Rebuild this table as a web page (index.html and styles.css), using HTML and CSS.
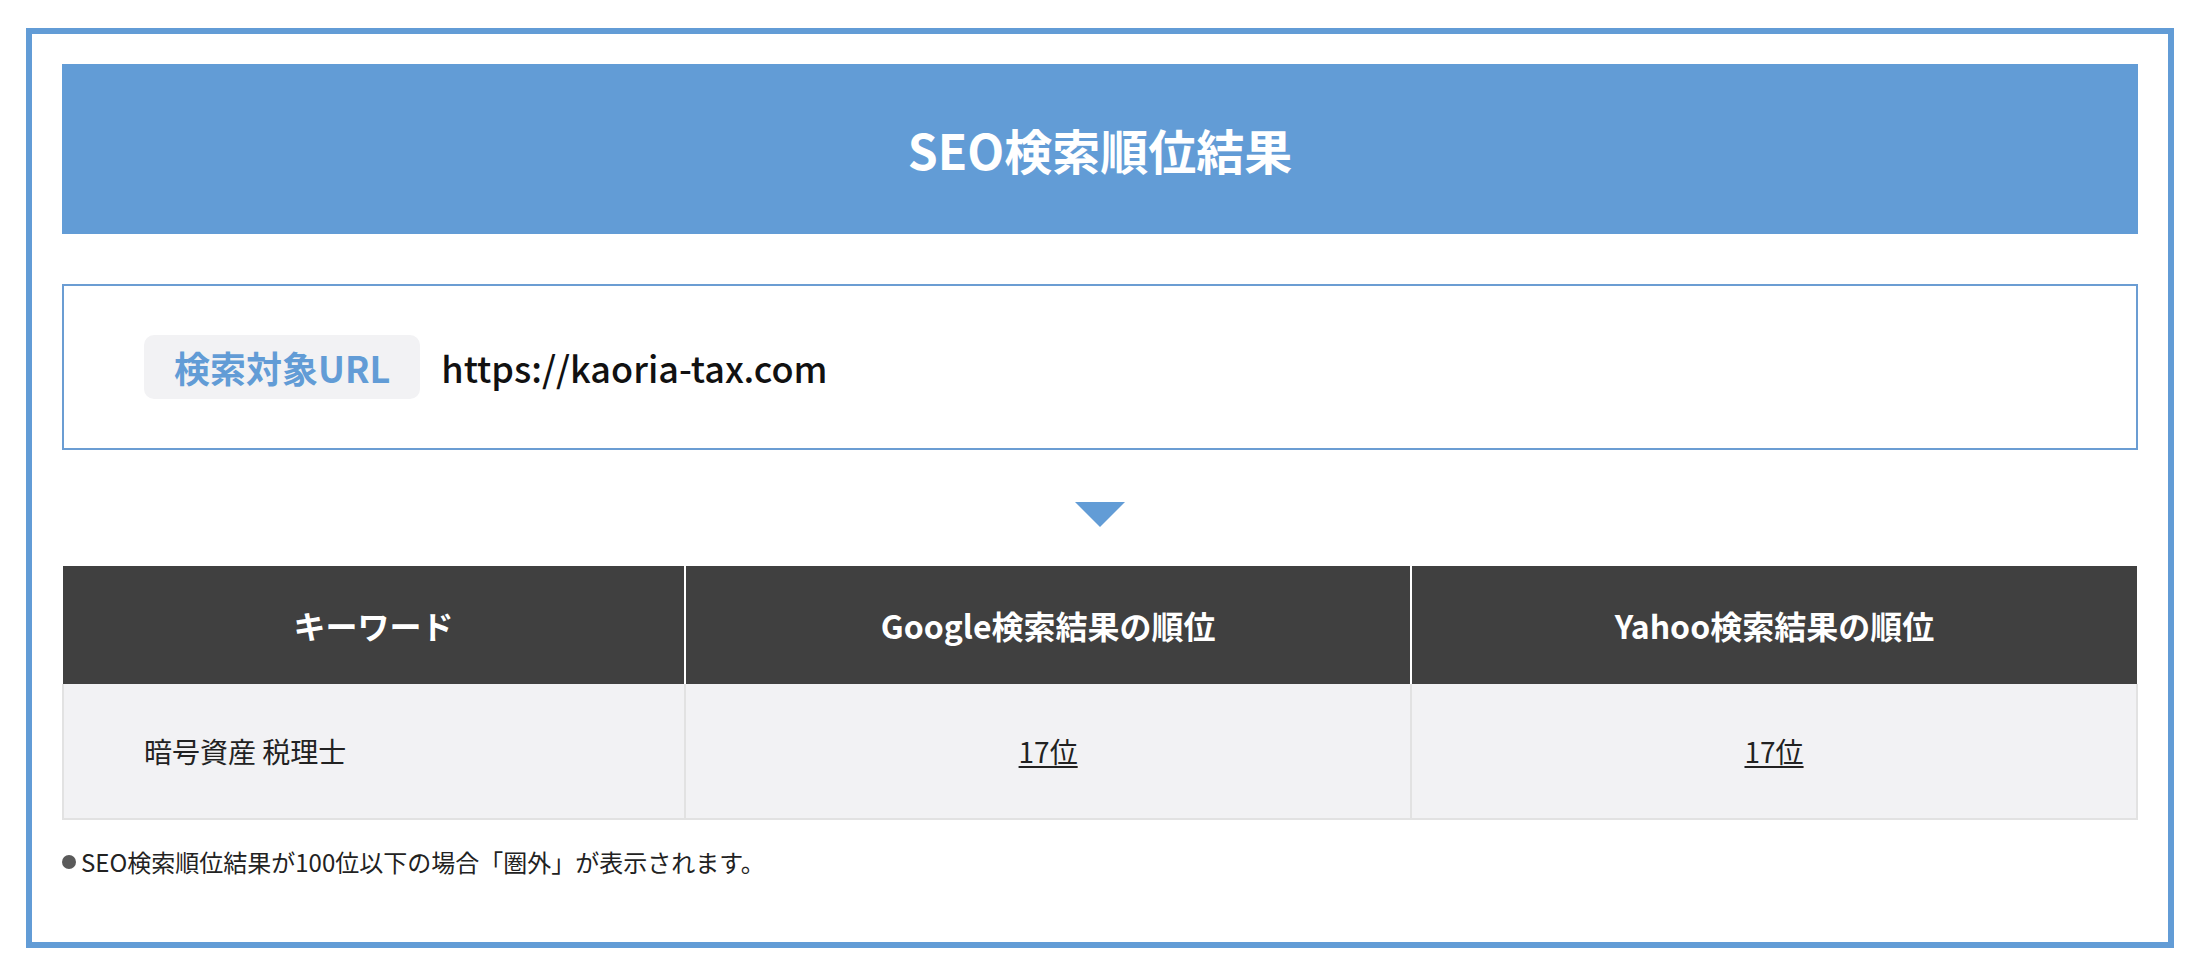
FILE: index.html
```html
<!DOCTYPE html>
<html lang="ja">
<head>
<meta charset="utf-8">
<title>SEO検索順位結果</title>
<link rel="stylesheet" href="styles.css">
</head>
<body>
<div class="page">
  <section class="box">
    <h1 class="title">SEO検索順位結果</h1>
    <div class="url-box">
      <span class="url-label">検索対象URL</span>
      <span class="url-text">https://kaoria-tax.com</span>
    </div>
    <div class="arrow-wrap"><span class="arrow"></span></div>
    <table class="rank-table">
      <colgroup>
        <col class="col-kw">
        <col class="col-rank">
        <col class="col-rank">
      </colgroup>
      <thead>
        <tr>
          <th>キーワード</th>
          <th>Google検索結果の順位</th>
          <th>Yahoo検索結果の順位</th>
        </tr>
      </thead>
      <tbody>
        <tr>
          <td class="kw">暗号資産 税理士</td>
          <td class="rank"><a href="#">17位</a></td>
          <td class="rank"><a href="#">17位</a></td>
        </tr>
      </tbody>
    </table>
    <p class="note"><span class="dot"></span>SEO検索順位結果が100位以下の場合「圏外」が表示されます。</p>
  </section>
</div>
</body>
</html>
```

FILE: styles.css
```css
* { box-sizing: border-box; }
html, body { margin: 0; padding: 0; background: #fff; }
body {
  font-family: "Noto Sans CJK JP", "Noto Sans", sans-serif;
  color: #222;
}
.page {
  padding: 28px 12px 25px 26px;
}
.box {
  border: 6px solid #629cd6;
  padding: 30px 30px 62px 30px;
}
.title {
  margin: 0;
  height: 170px;
  background: #629cd6;
  color: #fff;
  font-size: 48px;
  font-weight: 700;
  display: flex;
  align-items: center;
  justify-content: center;
  letter-spacing: 0;
}
.url-box {
  margin-top: 50px;
  height: 166px;
  border: 2px solid #6b9dd3;
  display: flex;
  align-items: center;
  padding-left: 80px;
  gap: 21px;
}
.url-label {
  display: inline-flex;
  align-items: center;
  height: 64px;
  padding: 0 30px;
  border-radius: 10px;
  background: #f2f2f4;
  color: #629cd6;
  font-size: 36px;
  font-weight: 700;
}
.url-text {
  font-size: 36px;
  font-weight: 500;
  color: #111;
}
.arrow-wrap {
  display: flex;
  justify-content: center;
  margin-top: 52px;
}
.arrow {
  width: 0;
  height: 0;
  border-left: 25px solid transparent;
  border-right: 25px solid transparent;
  border-top: 25px solid #629cd6;
}
.rank-table {
  margin-top: 39px;
  width: 100%;
  border-collapse: collapse;
  table-layout: fixed;
}
.col-kw { width: 30%; }
.col-rank { width: 35%; }
.rank-table th {
  height: 118px;
  background: #404040;
  color: #fff;
  font-size: 32px;
  font-weight: 700;
  text-align: center;
  border-left: 2px solid #fff;
  padding: 0;
}
.rank-table th:first-child { border-left: none; }
.rank-table td {
  height: 135px;
  background: #f2f2f4;
  border: 2px solid #e2e2e2;
  border-top: none;
  font-size: 28px;
  padding: 0;
}
.rank-table td.kw {
  padding-left: 80px;
}
.rank-table td.rank {
  text-align: center;
}
.rank-table td.rank a {
  color: #222;
  text-decoration: underline;
  text-underline-offset: 3px;
}
.note {
  margin: 24px 0 0 0;
  font-size: 24px;
  line-height: 36px;
  display: flex;
  align-items: center;
  color: #222;
}
.dot {
  width: 14px;
  height: 14px;
  border-radius: 50%;
  background: #5a5a5a;
  margin-right: 5px;
  flex: none;
}
```
